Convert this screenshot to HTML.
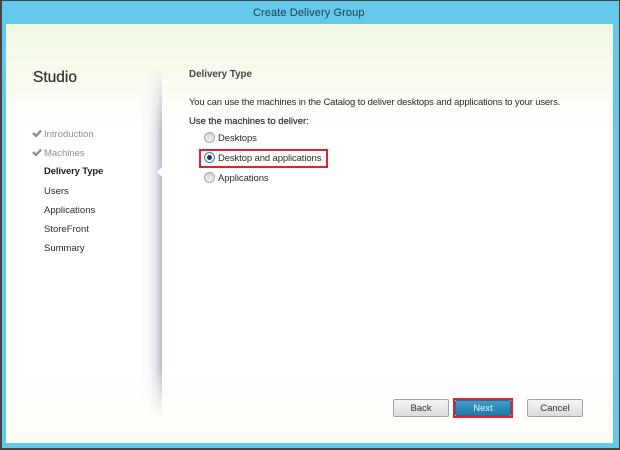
<!DOCTYPE html>
<html><head><meta charset="utf-8"><style>
html,body{margin:0;padding:0}
body{width:620px;height:450px;position:relative;overflow:hidden;background:#63c8ea;font-family:"Liberation Sans",sans-serif;color:#2b2b2b}
.a{position:absolute}
.t{position:absolute;white-space:nowrap;font-size:9.5px;line-height:12px;filter:blur(.25px)}
.r{position:absolute;width:9px;height:9px;border-radius:50%;border:1px solid #a8a8a8;background:linear-gradient(#d4d4d4,#f4f4f4)}
.b{position:absolute;top:399px;height:16px;border:1px solid #a5a5a5;border-radius:2px;background:linear-gradient(#f6f6f6,#dcdcdc);text-align:center;font:9.5px/18px "Liberation Sans",sans-serif;color:#333}
</style></head><body>
<div class="a" style="left:0;top:0;width:620px;height:1px;background:#444"></div>
<div class="a" style="left:0;top:448px;width:620px;height:2px;background:#444"></div>
<div class="a" style="left:0;top:0;width:1.5px;height:450px;background:#444"></div>
<div class="a" style="right:0;top:0;width:1.5px;height:450px;background:#444"></div>
<div class="t" style="left:253px;top:7px;font-size:11px;letter-spacing:.1px;color:#1d3d4d">Create Delivery Group</div>
<div class="a" style="left:6px;top:24px;width:607px;height:419px;background:linear-gradient(180deg,#eff7e2 0,#f6fbec 40px,#ffffff 110px,#ffffff 340px,#fdfff6 419px)"></div>
<div class="a" style="left:140px;top:68px;width:22px;height:350px;background:linear-gradient(90deg,rgba(190,195,205,0) 0,rgba(190,195,205,.12) 40%,rgba(185,190,202,.45) 75%,rgba(175,180,195,.9) 100%);-webkit-mask-image:linear-gradient(180deg,transparent,#000 60px,#000 300px,transparent)"></div>
<div class="a" style="left:157px;top:167px;width:0;height:0;border:5px solid transparent;border-right-color:#fff;border-left:0"></div>
<div class="t" style="left:33px;top:69px;font-size:15.5px;line-height:18px;color:#333;-webkit-text-stroke:.25px #333">Studio</div>
<svg class="a" style="left:32px;top:129px" width="10" height="30" viewBox="0 0 10 30"><path d="M1 4l3 3 5-5.500M1 23l3 3 5-5.500" fill="none" stroke="#8b8b8b" stroke-width="2.300"/></svg>
<div class="t" style="left:44px;top:129px;color:#8f8f8f">Introduction</div>
<div class="t" style="left:44px;top:148px;color:#8f8f8f">Machines</div>
<div class="t" style="left:44px;top:166px;font-weight:bold;color:#1f1f1f;letter-spacing:-.15px">Delivery Type</div>
<div class="t" style="left:44px;top:186px">Users</div>
<div class="t" style="left:44px;top:205px">Applications</div>
<div class="t" style="left:44px;top:224px">StoreFront</div>
<div class="t" style="left:44px;top:243px">Summary</div>
<div class="t" style="left:189px;top:69px;font-weight:bold;font-size:9.8px;color:#444">Delivery Type</div>
<div class="t" style="left:189px;top:97px;letter-spacing:-.16px">You can use the machines in the Catalog to deliver desktops and applications to your users.</div>
<div class="t" style="left:189px;top:116px;color:#333;font-size:9.5px;-webkit-text-stroke:.2px #333">Use the machines to deliver:</div>
<div class="r" style="left:204px;top:132px"></div>
<div class="t" style="left:218px;top:133px;letter-spacing:-.1px">Desktops</div>
<div class="a" style="left:199px;top:149px;width:125px;height:15px;border:2px solid #e3202e"></div>
<div class="r" style="left:204px;top:152px;background:#eef3f8;border-color:#3f7fb5"></div>
<div class="a" style="left:207px;top:155px;width:5px;height:5px;border-radius:50%;background:#2a3a4a"></div>
<div class="t" style="left:218px;top:153px;letter-spacing:-.12px">Desktop and applications</div>
<div class="r" style="left:204px;top:172px"></div>
<div class="t" style="left:218px;top:173px;letter-spacing:-.05px">Applications</div>
<div class="b" style="left:393px;width:54px">Back</div>
<div class="a" style="left:453px;top:398px;width:56px;height:16px;border:2px solid #e3202e"></div>
<div class="b" style="left:455px;top:400px;width:54px;height:14px;line-height:15px;border-color:#1f6f9e;background:linear-gradient(#3f9ccb,#1f78a8);color:#eaf6fc">Next</div>
<div class="b" style="left:527px;width:54px">Cancel</div>
</body></html>
